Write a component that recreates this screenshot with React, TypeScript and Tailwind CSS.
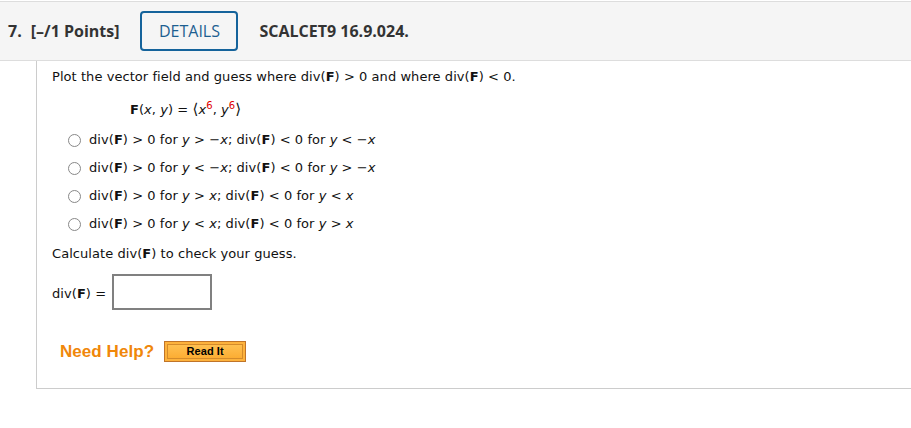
import React from 'react';

const options = [
  { a: '>', b: '−x', c: '<', d: '−x' },
  { a: '<', b: '−x', c: '>', d: '−x' },
  { a: '>', b: 'x', c: '<', d: 'x' },
  { a: '<', b: 'x', c: '>', d: 'x' },
];

function DivF() {
  return (
    <span>
      div(<b>F</b>)
    </span>
  );
}

export default function App() {
  return (
    <div className="w-[911px] h-[428px] bg-white overflow-hidden pt-px">
      {/* question header */}
      <header className="h-[60px] bg-[#f5f5f5] border-y border-[#dddddd] flex items-center pl-2 font-['Open_Sans',sans-serif] text-[16px] text-[#333333] font-bold">
        <span>7.</span>
        <span className="ml-[9px]">[–/1 Points]</span>
        <div className="ml-[21px] w-[98px] h-[40px] rounded-[4px] border-2 border-[#15639b] flex items-center justify-center font-normal text-[#1d5f91] text-[16px]">
          DETAILS
        </div>
        <span className="ml-[21px]">SCALCET9 16.9.024.</span>
      </header>

      {/* question body */}
      <section className="ml-9 h-[328px] border-l border-b border-[#cccccc] pl-[15px] pt-[6px] font-['DejaVu_Sans',Verdana,sans-serif] text-[13px] tracking-[0.06px] text-[#111111]">
        <p className="leading-[20px]">
          Plot the vector field and guess where <DivF /> &gt; 0 and where <DivF /> &lt; 0.
        </p>
        <p className="mt-[12px] ml-[78px] leading-[20px]">
          <b>F</b>(<i>x</i>, <i>y</i>) = <span className="text-[15px]">⟨</span>
          <i>x</i>
          <sup className="text-[#e00000] text-[10px]">6</sup>, <i>y</i>
          <sup className="text-[#e00000] text-[10px]">6</sup>
          <span className="text-[15px]">⟩</span>
        </p>
        <div className="mt-[10px] ml-4 flex flex-col gap-2">
          {options.map((o, i) => (
            <label key={i} className="flex items-center h-5 gap-[8px]">
              <span className="w-[13px] h-[13px] rounded-full border border-[#888888] bg-white" />
              <span>
                <DivF /> &gt; 0 for <i>y</i> {o.a} <i>{o.b}</i>; <DivF /> &lt; 0 for <i>y</i> {o.c}{' '}
                <i>{o.d}</i>
              </span>
            </label>
          ))}
        </div>
        <p className="mt-[10px] leading-[20px]">
          Calculate <DivF /> to check your guess.
        </p>
        <div className="mt-[10px] flex items-center gap-[6px]">
          <span className="pt-[3px]">
            <DivF /> =
          </span>
          <div className="w-[100px] h-[36px] border-2 border-[#808080] bg-white" />
        </div>
        <div className="mt-[29px] ml-2 flex items-center gap-[10px]">
          <span className="font-['Liberation_Sans',Arial,sans-serif] font-bold text-[17px] text-[#f0870a]">
            Need Help?
          </span>
          <button className="w-[82px] h-[21px] border border-[#c07429] bg-[#fdb23c] p-[2px] flex">
            <span className="flex-1 border border-[#d58b2a] bg-gradient-to-b from-[#ffc04f] to-[#fcad33] flex items-center justify-center font-['Liberation_Sans',Arial,sans-serif] font-bold text-[11px] text-black leading-none">
              Read It
            </span>
          </button>
        </div>
      </section>
    </div>
  );
}
